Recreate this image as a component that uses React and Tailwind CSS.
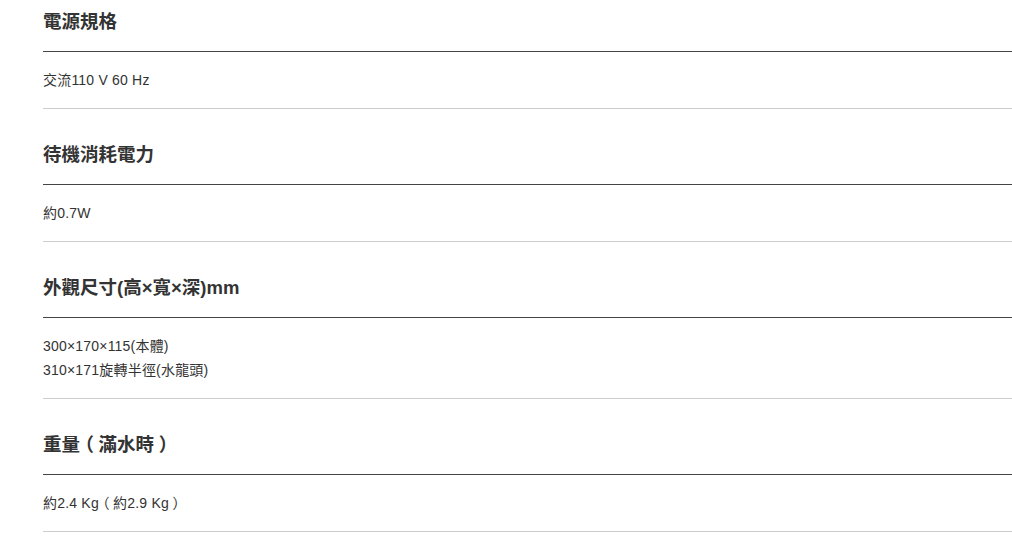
import React from 'react';

const specs = [
  { title: '電源規格', lines: ['交流110 V 60 Hz'] },
  { title: '待機消耗電力', lines: ['約0.7W'] },
  { title: '外觀尺寸(高×寬×深)mm', lines: ['300×170×115(本體)', '310×171旋轉半徑(水龍頭)'] },
  { title: '重量（滿水時）', lines: ['約2.4 Kg（約2.9 Kg）'] },
];

// the reference font centres fullwidth brackets: use the half-width form with padding
const renderText = text =>
  text.split(/([（）])/).map((part, i) =>
    part === '（' || part === '）' ? (
      <span key={i} className="inline-block px-[0.25em] [font-feature-settings:'halt']">{part}</span>
    ) : (
      part
    )
  );

const App = () => {
  return (
    <div
      className="w-[1012px] h-[545px] overflow-hidden bg-white pl-[43px] text-[#333]"
      style={{ fontFamily: '"Liberation Sans", "Noto Sans CJK TC", sans-serif' }}
    >
      {specs.map((spec, i) => (
        <div key={spec.title}>
          <h3
            className={`${i === 0 ? 'pt-[9px]' : 'pt-[33px]'} pb-[16px] text-[18.5px] leading-[26px] font-bold border-b border-[#444]`}
          >
            {renderText(spec.title)}
          </h3>
          <div className="pt-[16px] pb-[16px] text-[14px] tracking-[0.2px] leading-[24px] border-b border-[#ccc]">
            {spec.lines.map(line => (
              <p key={line}>{renderText(line)}</p>
            ))}
          </div>
        </div>
      ))}
    </div>
  );
};

export default App;
